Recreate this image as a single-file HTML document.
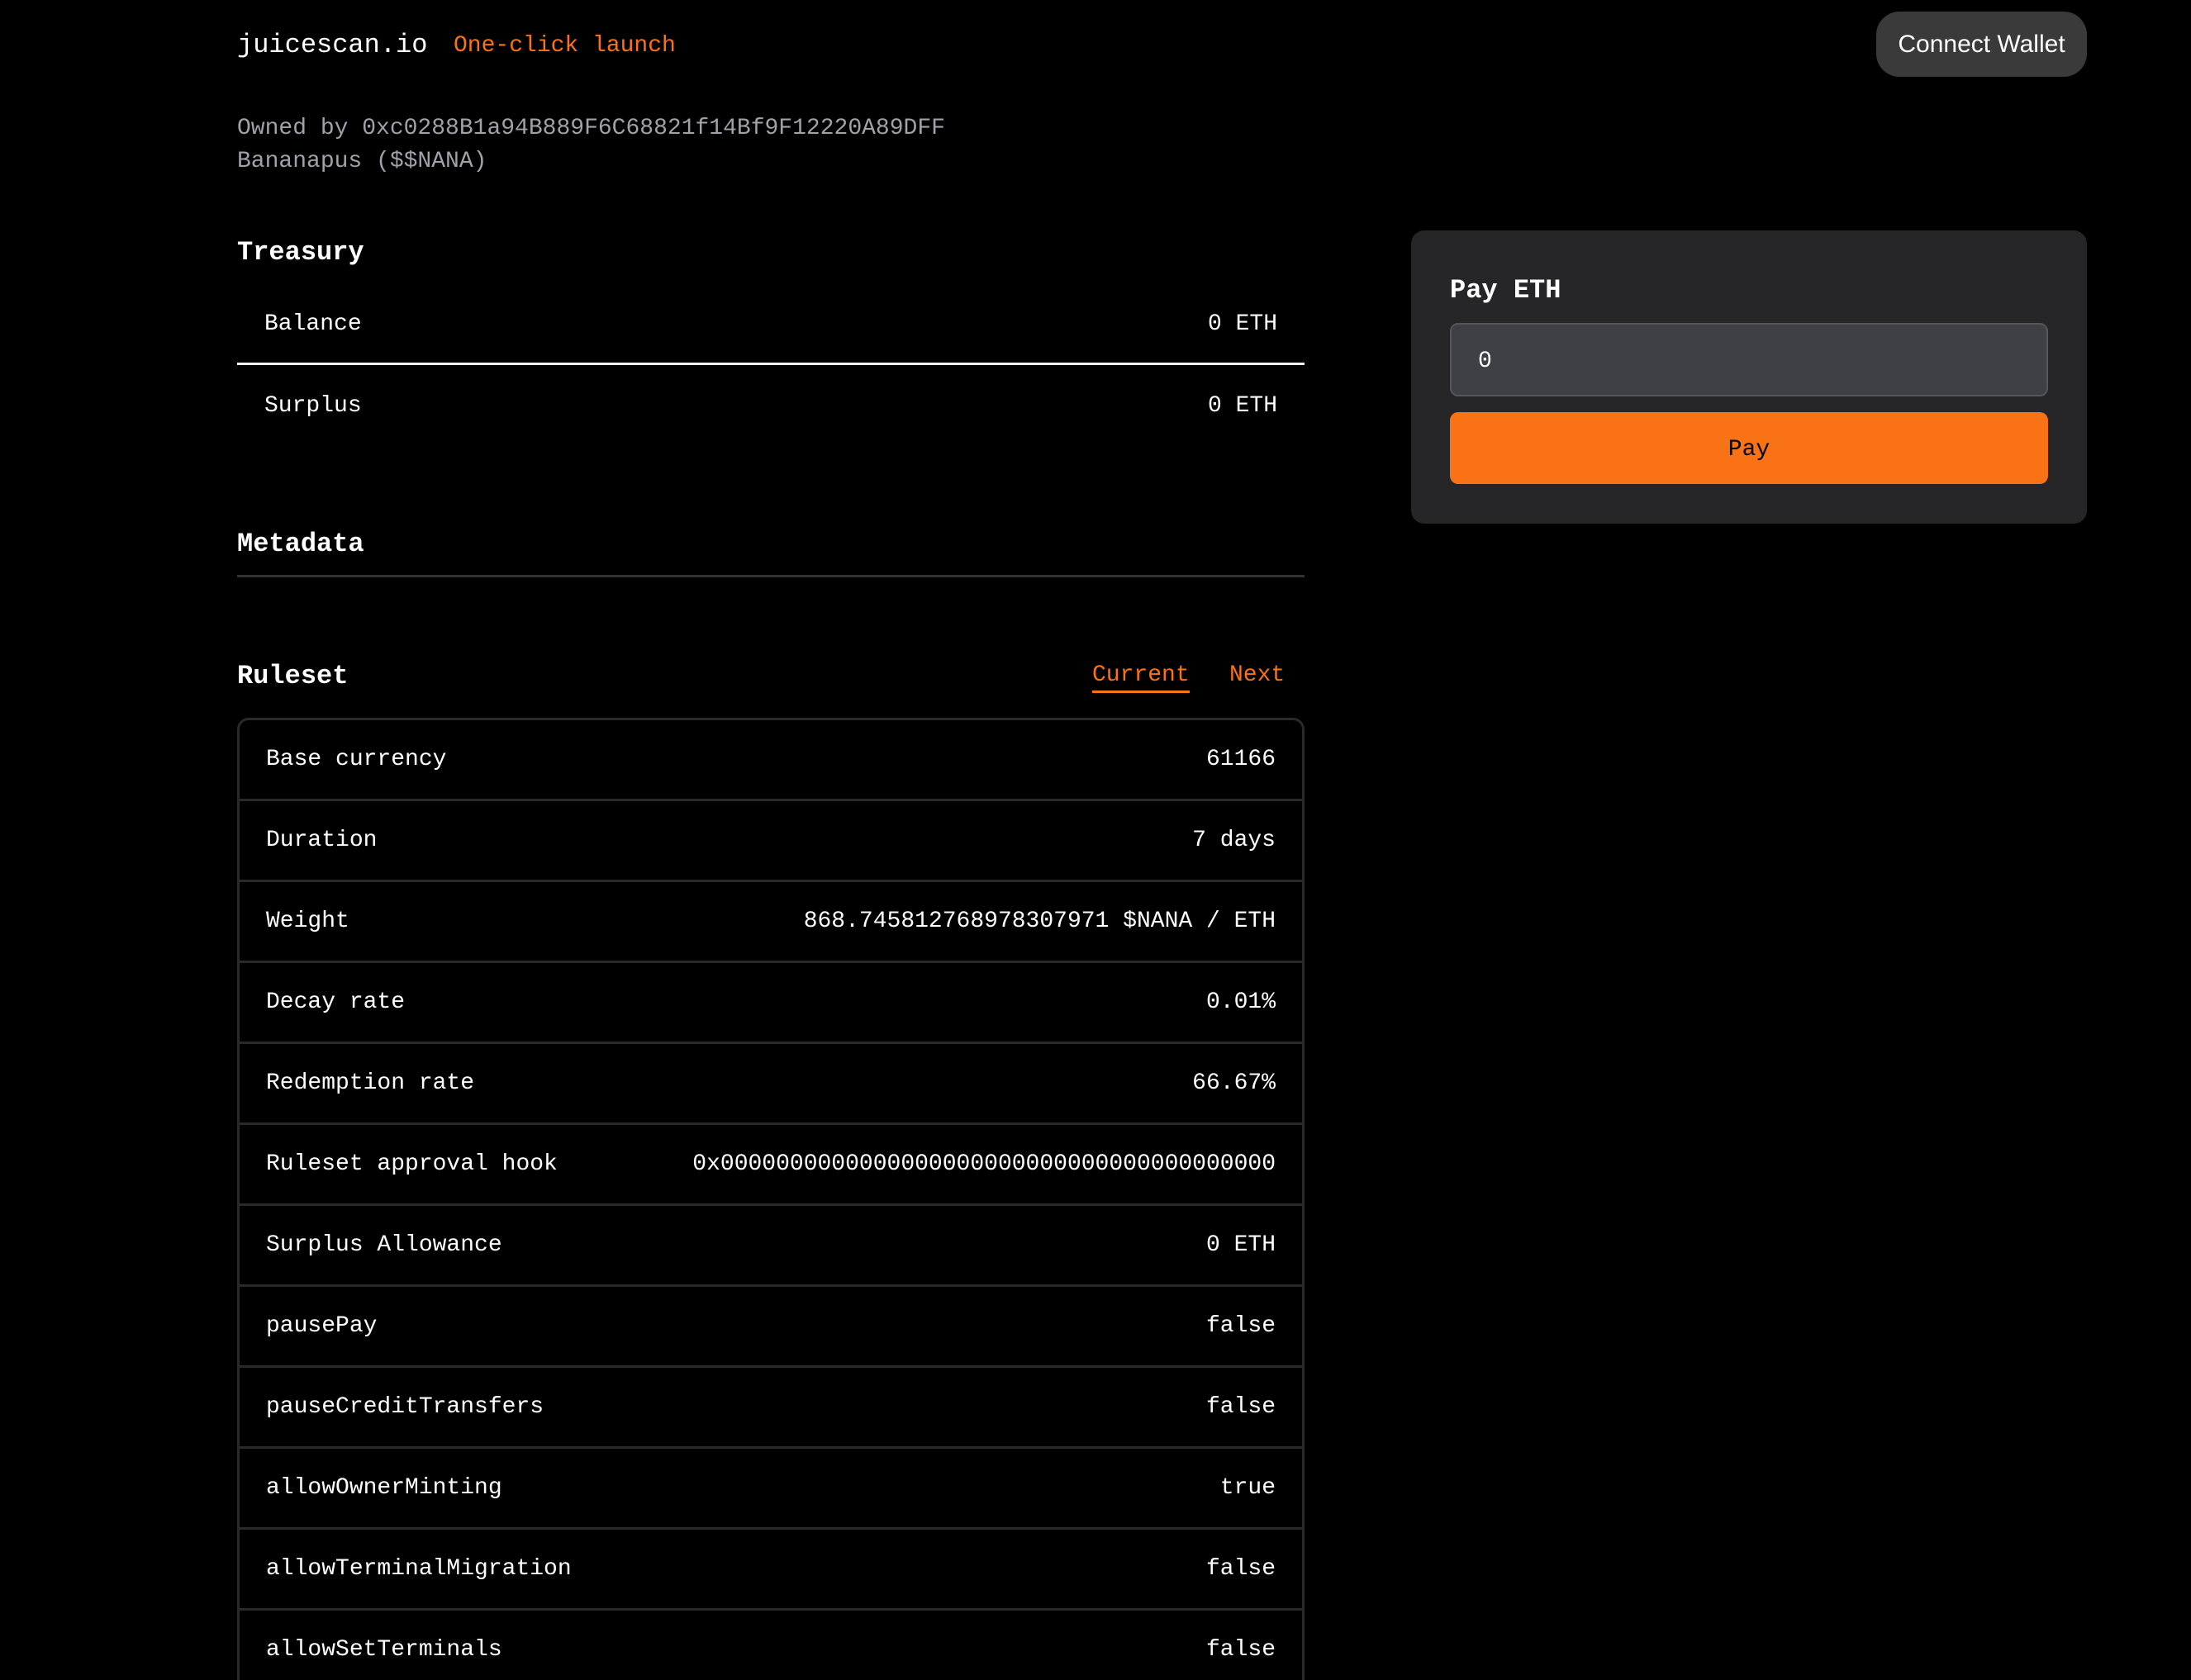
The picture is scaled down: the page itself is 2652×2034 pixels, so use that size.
<!DOCTYPE html>
<html style="overflow:hidden;height:2034px"><head><meta charset="utf-8"><style>
*{box-sizing:border-box;margin:0;padding:0}
body{width:2652px;height:2034px;overflow:hidden;background:#000;color:#fff;font-family:"Liberation Mono",monospace;position:relative}
#w{position:absolute;left:0;top:0;width:2652px;height:2034px;overflow:hidden}
.a{position:absolute;white-space:nowrap}
.row{display:flex;justify-content:space-between;align-items:center;font-size:28px}
</style></head><body><div id="w">
<div class="a" style="left:287px;top:35px;font-size:32px;line-height:40px">juicescan.io</div>
<div class="a" style="left:549px;top:38px;font-size:28px;line-height:36px;color:#f97316">One-click launch</div>
<div class="a" style="left:2271px;top:14px;width:255px;height:79px;border-radius:28px;background:#3a3a3a;font-family:'Liberation Sans',sans-serif;font-size:30px;display:flex;align-items:center;justify-content:center">Connect Wallet</div>
<div class="a" style="left:287px;top:136px;font-size:28px;line-height:40px;color:#a1a1aa">Owned by 0xc0288B1a94B889F6C68821f14Bf9F12220A89DFF<br>Bananapus ($$NANA)</div>
<div class="a" style="left:287px;top:286px;font-size:32px;font-weight:bold;line-height:40px">Treasury</div>
<div class="a row" style="left:287px;top:346px;width:1292px;height:96px;padding:0 33px 0 33px;border-bottom:3px solid #fff"><span>Balance</span><span>0 ETH</span></div>
<div class="a row" style="left:287px;top:443px;width:1292px;height:96px;padding:0 33px"><span>Surplus</span><span>0 ETH</span></div>
<div class="a" style="left:287px;top:639px;font-size:32px;font-weight:bold;line-height:40px">Metadata</div>
<div class="a" style="left:287px;top:696px;width:1292px;height:3px;background:#333"></div>
<div class="a" style="left:287px;top:799px;font-size:32px;font-weight:bold;line-height:40px">Ruleset</div>
<div class="a" style="left:1322px;top:800px;font-size:28px;line-height:36px;color:#f97316;border-bottom:3px solid #f97316">Current</div>
<div class="a" style="left:1488px;top:800px;font-size:28px;line-height:36px;color:#f97316">Next</div>
<div class="a" style="left:287px;top:869px;width:1292px;height:1250px;border:3px solid #2a2a2a;border-radius:14px;overflow:hidden">
<div class="row" style="height:98px;padding:0 32px;border-bottom:3px solid #2a2a2a"><span>Base currency</span><span>61166</span></div>
<div class="row" style="height:98px;padding:0 32px;border-bottom:3px solid #2a2a2a"><span>Duration</span><span>7 days</span></div>
<div class="row" style="height:98px;padding:0 32px;border-bottom:3px solid #2a2a2a"><span>Weight</span><span>868.745812768978307971 $NANA / ETH</span></div>
<div class="row" style="height:98px;padding:0 32px;border-bottom:3px solid #2a2a2a"><span>Decay rate</span><span>0.01%</span></div>
<div class="row" style="height:98px;padding:0 32px;border-bottom:3px solid #2a2a2a"><span>Redemption rate</span><span>66.67%</span></div>
<div class="row" style="height:98px;padding:0 32px;border-bottom:3px solid #2a2a2a"><span>Ruleset approval hook</span><span>0x0000000000000000000000000000000000000000</span></div>
<div class="row" style="height:98px;padding:0 32px;border-bottom:3px solid #2a2a2a"><span>Surplus Allowance</span><span>0 ETH</span></div>
<div class="row" style="height:98px;padding:0 32px;border-bottom:3px solid #2a2a2a"><span>pausePay</span><span>false</span></div>
<div class="row" style="height:98px;padding:0 32px;border-bottom:3px solid #2a2a2a"><span>pauseCreditTransfers</span><span>false</span></div>
<div class="row" style="height:98px;padding:0 32px;border-bottom:3px solid #2a2a2a"><span>allowOwnerMinting</span><span>true</span></div>
<div class="row" style="height:98px;padding:0 32px;border-bottom:3px solid #2a2a2a"><span>allowTerminalMigration</span><span>false</span></div>
<div class="row" style="height:98px;padding:0 32px;border-bottom:3px solid #2a2a2a"><span>allowSetTerminals</span><span>false</span></div>
</div>
<div class="a" style="left:1708px;top:279px;width:818px;height:355px;background:#262628;border-radius:16px"></div>
<div class="a" style="left:1755px;top:332px;font-size:32px;font-weight:bold;line-height:40px">Pay ETH</div>
<div class="a" style="left:1755px;top:391px;width:724px;height:89px;background:#3f4045;border:2px solid #55565b;border-radius:10px;font-size:28px;padding-left:32px;padding-top:4px;display:flex;align-items:center">0</div>
<div class="a" style="left:1755px;top:499px;width:724px;height:87px;background:#f97316;border-radius:10px;font-size:28px;color:#000;display:flex;align-items:center;justify-content:center;padding-top:3px">Pay</div>
</div></body></html>
